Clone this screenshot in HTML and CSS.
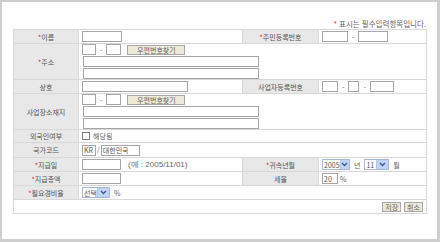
FILE: index.html
```html
<!DOCTYPE html>
<html lang="ko">
<head>
    <meta charset="UTF-8">
    <meta name="viewport" content="width=device-width, initial-scale=1.0">
    <title>소득자 등록</title>
    <link rel="stylesheet" href="styles.css">
</head>
<body>
    <div class="frame">
        <p class="note"><span class="req">*</span> 표시는 필수입력항목입니다.</p>
        <table class="form">
            <colgroup>
                <col class="c1"><col class="c2"><col class="c3"><col class="c4">
            </colgroup>
            <tr class="row">
                <th><span class="req">*</span>이름</th>
                <td><input class="inp w40" type="text"></td>
                <th><span class="req">*</span>주민등록번호</th>
                <td><input class="inp w26" type="text"><span class="dash">-</span><input class="inp w30" type="text"></td>
            </tr>
            <tr class="row-addr">
                <th><span class="req">*</span>주소</th>
                <td colspan="3">
                    <div class="addr">
                        <div class="line">
                            <input class="inp w14" type="text"><span class="dash">-</span><input class="inp w15" type="text">
                            <button class="btn zip" type="button">우편번호찾기</button>
                        </div>
                        <input class="inp w176" type="text">
                        <input class="inp w176" type="text">
                    </div>
                </td>
            </tr>
            <tr class="row">
                <th>상호</th>
                <td><input class="inp w106" type="text"></td>
                <th>사업자등록번호</th>
                <td><input class="inp w16" type="text"><span class="dash">-</span><input class="inp w11" type="text"><span class="dash">-</span><input class="inp w24" type="text"></td>
            </tr>
            <tr class="row-addr2">
                <th>사업장소재지</th>
                <td colspan="3">
                    <div class="addr">
                        <div class="line">
                            <input class="inp w14" type="text"><span class="dash">-</span><input class="inp w15" type="text">
                            <button class="btn zip" type="button">우편번호찾기</button>
                        </div>
                        <input class="inp w176" type="text">
                        <input class="inp w176" type="text">
                    </div>
                </td>
            </tr>
            <tr class="row-sm">
                <th>외국인여부</th>
                <td colspan="3"><label class="chk"><input class="box" type="checkbox"> 해당됨</label></td>
            </tr>
            <tr class="row-lg">
                <th>국가코드</th>
                <td colspan="3"><input class="inp w14" type="text" value="KR"><span class="slash">/</span><input class="inp w39" type="text" value="대한민국"></td>
            </tr>
            <tr class="row">
                <th><span class="req">*</span>지급일</th>
                <td><input class="inp w39" type="text"><span class="hint">(예 : 2005/11/01)</span></td>
                <th><span class="req">*</span>귀속년월</th>
                <td>
                    <span class="sel w28"><span class="val">2005</span><span class="arrow"><svg width="7" height="5" viewBox="0 0 7 5"><path d="M1 1 L3.5 3.5 L6 1" fill="none" stroke="#3b5998" stroke-width="1.4"/></svg></span></span>
                    <span class="unit">년</span>
                    <span class="sel w25"><span class="val">11</span><span class="arrow"><svg width="7" height="5" viewBox="0 0 7 5"><path d="M1 1 L3.5 3.5 L6 1" fill="none" stroke="#3b5998" stroke-width="1.4"/></svg></span></span>
                    <span class="unit">월</span>
                </td>
            </tr>
            <tr class="row">
                <th><span class="req">*</span>지급총액</th>
                <td><input class="inp w39" type="text"></td>
                <th>세율</th>
                <td><input class="inp w16" type="text" value="20"><span class="unit">%</span></td>
            </tr>
            <tr class="row">
                <th><span class="req">*</span>필요경비율</th>
                <td colspan="3">
                    <span class="sel w28"><span class="val">선택</span><span class="arrow"><svg width="7" height="5" viewBox="0 0 7 5"><path d="M1 1 L3.5 3.5 L6 1" fill="none" stroke="#3b5998" stroke-width="1.4"/></svg></span></span>
                    <span class="unit">%</span>
                </td>
            </tr>
            <tr class="row-btn">
                <td colspan="4" class="actions">
                    <button class="btn" type="button">저장</button>
                    <button class="btn" type="button">취소</button>
                </td>
            </tr>
        </table>
    </div>
</body>
</html>
```

FILE: styles.css
```css
body {
    margin: 0;
    font-family: "Noto Sans CJK KR", "Noto Sans", sans-serif;
    font-size: 7px;
    color: #666;
}
.frame {
    box-sizing: border-box;
    height: 242px;
    border: solid #cfcfcf;
    border-width: 2px 3px 3px 2px;
    background-color: #fff;
    padding: 17px 11px 0 11px;
}
.note {
    margin: 0;
    height: 10px;
    line-height: 10px;
    text-align: right;
    font-size: 7.5px;
}
.req {
    color: #e4141b;
}
.form {
    border-collapse: collapse;
    table-layout: fixed;
    width: 413px;
}
.c1 { width: 65px; }
.c2 { width: 164px; }
.c3 { width: 76px; }
.c4 { width: 108px; }
.form th,
.form td {
    border: 1px solid #d8d8d8;
    padding: 0 3px;
    line-height: 10px;
    vertical-align: middle;
    white-space: nowrap;
}
.form th {
    background-color: #e8e8e8;
    font-weight: normal;
    text-align: center;
    color: #555;
    padding: 0;
}
.row th, .row td { height: 13px; }
.row-sm th, .row-sm td { height: 12px; }
.row-lg th, .row-lg td { height: 14px; }
.row-addr th, .row-addr td { height: 35px; }
.row-addr2 th, .row-addr2 td { height: 33px; }
.row-btn td { height: 13px; }

.inp {
    box-sizing: border-box;
    height: 11px;
    margin: 0;
    padding: 0 1px;
    border: 1px solid #a6a6a6;
    font: inherit;
    font-size: 7px;
    color: #555;
    vertical-align: middle;
    background-color: #fff;
}
.w11 { width: 11px; }
.w14 { width: 14px; }
.w15 { width: 15px; }
.w16 { width: 16px; }
.w24 { width: 24px; }
.w26 { width: 26px; }
.w30 { width: 30px; }
.w39 { width: 39px; }
.w40 { width: 40px; }
.w106 { width: 106px; }
.w176 { width: 176px; margin-left: 1px; }

.dash {
    display: inline-block;
    margin: 0 4px;
    vertical-align: middle;
}
.slash {
    margin: 0 1px;
    vertical-align: middle;
}
.addr {
    display: flex;
    flex-direction: column;
    gap: 1px;
}
.line {
    display: flex;
    align-items: center;
    height: 11px;
}
.btn {
    box-sizing: border-box;
    height: 10px;
    margin: 0;
    padding: 0 3px;
    border: 1px solid #a8a8a8;
    background-color: #ece9d8;
    font: inherit;
    font-size: 7px;
    line-height: 8px;
    color: #666;
    vertical-align: middle;
}
.zip {
    width: 58px;
    margin-left: 6px;
}
.chk {
    display: inline-flex;
    align-items: center;
    gap: 3px;
}
.box {
    appearance: none;
    box-sizing: border-box;
    width: 8px;
    height: 8px;
    margin: 0;
    border: 1px solid #808080;
    background-color: #fff;
}
.hint {
    margin-left: 7px;
    font-family: "Liberation Sans", Arial, sans-serif;
    font-size: 8px;
    vertical-align: middle;
}
.sel {
    box-sizing: border-box;
    display: inline-flex;
    align-items: center;
    justify-content: space-between;
    height: 11px;
    border: 1px solid #a6b8d4;
    vertical-align: middle;
    background-color: #fff;
}
.sel .val {
    padding-left: 1px;
    color: #555;
}
.w25 { width: 25px; }
.w28 { width: 28px; }
.arrow {
    display: flex;
    align-items: center;
    justify-content: center;
    width: 11px;
    height: 9px;
    background-color: #c3d3f8;
    border-left: 1px solid #b5c7ef;
}
.unit {
    margin: 0 2px;
    vertical-align: middle;
}
.actions {
    text-align: right;
}
.actions .btn {
    padding: 0 2px;
    margin-left: 1px;
}
```
